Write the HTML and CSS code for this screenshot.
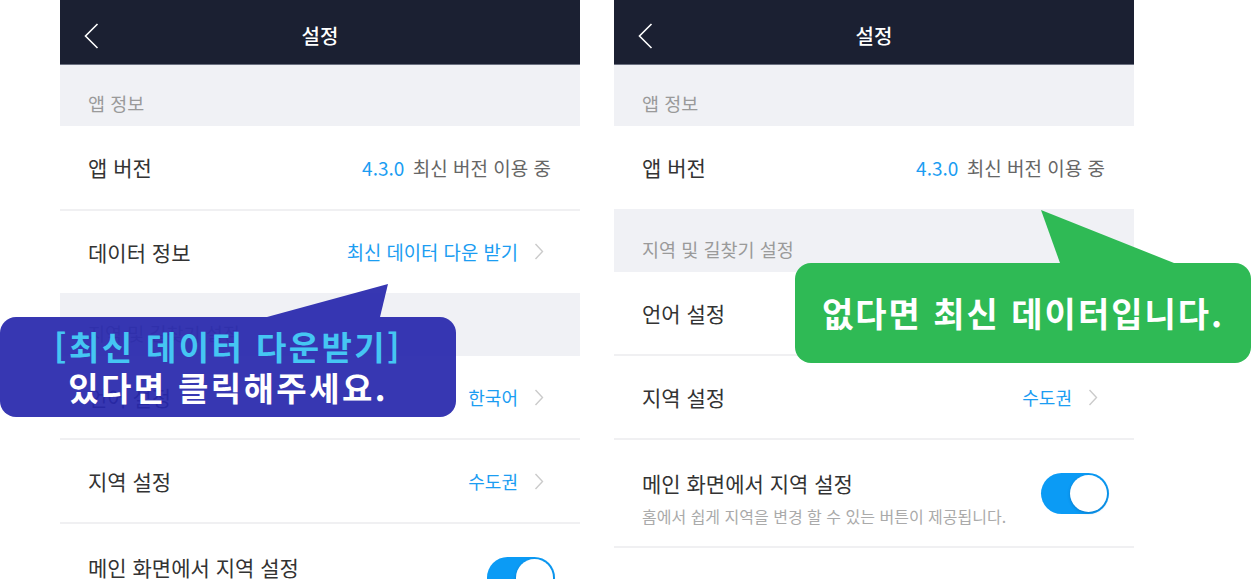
FILE: index.html
```html
<!DOCTYPE html>
<html lang="ko">
<head>
    <meta charset="UTF-8">
    <meta name="viewport" content="width=device-width, initial-scale=1.0">
    <title>설정 - 데이터 정보</title>
    <link rel="stylesheet" href="styles.css">
</head>
<body>
    <div class="stage">
        <!-- left screen -->
        <div class="phone">
            <header class="topbar">
                <svg class="back" width="15" height="26" viewBox="0 0 15 26"><polyline points="13.5,1 1.5,13 13.5,25" fill="none" stroke="#fff" stroke-width="1.6"/></svg>
                <h1>설정</h1>
                <span></span>
            </header>
            <div class="section first">앱 정보</div>
            <div class="row version">
                <span class="label">앱 버전</span>
                <span class="value"><em>4.3.0</em> 최신 버전 이용 중</span>
            </div>
            <div class="row">
                <span class="label">데이터 정보</span>
                <span class="link big">최신 데이터 다운 받기<svg class="chev" width="10" height="17" viewBox="0 0 10 17"><polyline points="1.5,1 8.5,8.5 1.5,16" fill="none" stroke="#cbcbcb" stroke-width="1.4"/></svg></span>
            </div>
            <div class="section">지역 및 길찾기 설정</div>
            <div class="row">
                <span class="label">언어 설정</span>
                <span class="link">한국어<svg class="chev" width="10" height="17" viewBox="0 0 10 17"><polyline points="1.5,1 8.5,8.5 1.5,16" fill="none" stroke="#cbcbcb" stroke-width="1.4"/></svg></span>
            </div>
            <div class="row">
                <span class="label">지역 설정</span>
                <span class="link">수도권<svg class="chev" width="10" height="17" viewBox="0 0 10 17"><polyline points="1.5,1 8.5,8.5 1.5,16" fill="none" stroke="#cbcbcb" stroke-width="1.4"/></svg></span>
            </div>
            <div class="row tall">
                <div class="text">
                    <span class="label">메인 화면에서 지역 설정</span>
                    <span class="sub">홈에서 쉽게 지역을 변경 할 수 있는 버튼이 제공됩니다.</span>
                </div>
                <span class="toggle on"><span class="knob"></span></span>
            </div>
        </div>

        <!-- right screen -->
        <div class="phone">
            <header class="topbar">
                <svg class="back" width="15" height="26" viewBox="0 0 15 26"><polyline points="13.5,1 1.5,13 13.5,25" fill="none" stroke="#fff" stroke-width="1.6"/></svg>
                <h1>설정</h1>
                <span></span>
            </header>
            <div class="section first">앱 정보</div>
            <div class="row version">
                <span class="label">앱 버전</span>
                <span class="value"><em>4.3.0</em> 최신 버전 이용 중</span>
            </div>
            <div class="section">지역 및 길찾기 설정</div>
            <div class="row">
                <span class="label">언어 설정</span>
                <span class="link">한국어<svg class="chev" width="10" height="17" viewBox="0 0 10 17"><polyline points="1.5,1 8.5,8.5 1.5,16" fill="none" stroke="#cbcbcb" stroke-width="1.4"/></svg></span>
            </div>
            <div class="row">
                <span class="label">지역 설정</span>
                <span class="link">수도권<svg class="chev" width="10" height="17" viewBox="0 0 10 17"><polyline points="1.5,1 8.5,8.5 1.5,16" fill="none" stroke="#cbcbcb" stroke-width="1.4"/></svg></span>
            </div>
            <div class="row tall last">
                <div class="text">
                    <span class="label">메인 화면에서 지역 설정</span>
                    <span class="sub">홈에서 쉽게 지역을 변경 할 수 있는 버튼이 제공됩니다.</span>
                </div>
                <span class="toggle on"><span class="knob"></span></span>
            </div>
        </div>

        <!-- callouts over the screens -->
        <div class="callout blue">
            <p class="hl">[최신 데이터 다운받기]</p>
            <p>있다면 클릭해주세요.</p>
        </div>
        <div class="callout green">
            <p>없다면 최신 데이터입니다.</p>
        </div>
    </div>
</body>
</html>
```

FILE: styles.css
```css
:root {
    --navy: #1b2032;
    --gray-bg: #f0f1f5;
    --blue: #1b9df2;
    --divider: #f0f0f2;
}

* {
    margin: 0;
    padding: 0;
    box-sizing: border-box;
}

body {
    font-family: "Noto Sans CJK KR", "Noto Sans", sans-serif;
    background: #fff;
    color: #333;
    width: 1251px;
    height: 579px;
    overflow: hidden;
}

.stage {
    position: relative;
    display: flex;
    gap: 34px;
    padding-left: 60px;
    height: 579px;
}

.phone {
    width: 520px;
    height: 579px;
    overflow: hidden;
    background: #fff;
}

/* header */
.topbar {
    height: 65px;
    padding: 8px 24px 0;
    background: var(--navy);
    border-bottom: 1px solid #6b7080;
    display: grid;
    grid-template-columns: 1fr auto 1fr;
    align-items: center;
}

.topbar h1 {
    color: #fff;
    font-size: 20px;
    font-weight: 500;
    line-height: 1;
}

.back {
    display: block;
}

/* sections and rows */
.section {
    height: 63px;
    background: var(--gray-bg);
    color: #9a9a9a;
    font-size: 18.5px;
    line-height: 1;
    padding: 0 28px 14px;
    display: flex;
    align-items: flex-end;
}

.section.first {
    height: 61px;
}

.row {
    height: 82px;
    padding: 0 36px 0 28px;
    display: flex;
    align-items: center;
    justify-content: space-between;
}

.row + .row {
    height: 84px;
    border-top: 2px solid var(--divider);
}

.row.version {
    height: 83px;
    padding-right: 29px;
}

.row.tall {
    height: 109px;
    padding-right: 25px;
}

.row.last {
    border-bottom: 2px solid var(--divider);
    height: 110px;
}

.label {
    font-size: 21px;
    line-height: 1;
    color: #333;
}

.value {
    font-size: 19px;
    line-height: 1;
    color: #666;
}

.value em {
    font-style: normal;
    color: var(--blue);
    margin-right: 3px;
}

.link {
    display: flex;
    align-items: center;
    gap: 16px;
    font-size: 18px;
    line-height: 1;
    color: var(--blue);
}

.link.big {
    font-size: 18.8px;
}

.chev {
    display: block;
}

.text {
    display: flex;
    flex-direction: column;
    gap: 14px;
    padding-top: 10px;
}

.sub {
    font-size: 16px;
    line-height: 1;
    color: #aaa;
}

/* switch */
.toggle {
    width: 68px;
    height: 41px;
    border-radius: 21px;
    background: #0b9bf5;
    display: flex;
    align-items: center;
    justify-content: flex-end;
    padding: 2px;
}

.knob {
    width: 37px;
    height: 37px;
    border-radius: 50%;
    background: #fff;
    box-shadow: 0 1px 3px rgba(0, 60, 120, 0.35);
}

/* callout bubbles */
.callout {
    position: absolute;
    height: 100px;
    width: 456px;
    border-radius: 16px;
    display: flex;
    flex-direction: column;
    align-items: center;
    justify-content: center;
    color: #fff;
    font-weight: 700;
    text-align: center;
}

.callout::before {
    content: "";
    position: absolute;
}

.callout.blue {
    left: 0;
    top: 317px;
    background: rgba(40, 40, 172, 0.93);
    font-size: 33px;
    letter-spacing: 2.4px;
    line-height: 41px;
}

.callout.blue::before {
    left: 267px;
    top: -33px;
    width: 121px;
    height: 33px;
    background: rgba(40, 40, 172, 0.93);
    clip-path: polygon(0 100%, 100% 0, 113px 100%);
}

.callout.blue .hl {
    color: #45c6f3;
}

.callout.green {
    left: 795px;
    top: 263px;
    background: #2fba55;
    font-size: 34px;
    letter-spacing: 2px;
    line-height: 1;
}

.callout.green::before {
    left: 246px;
    top: -53px;
    width: 133px;
    height: 53px;
    background: #2fba55;
    clip-path: polygon(19px 100%, 0 0, 100% 100%);
}
```
